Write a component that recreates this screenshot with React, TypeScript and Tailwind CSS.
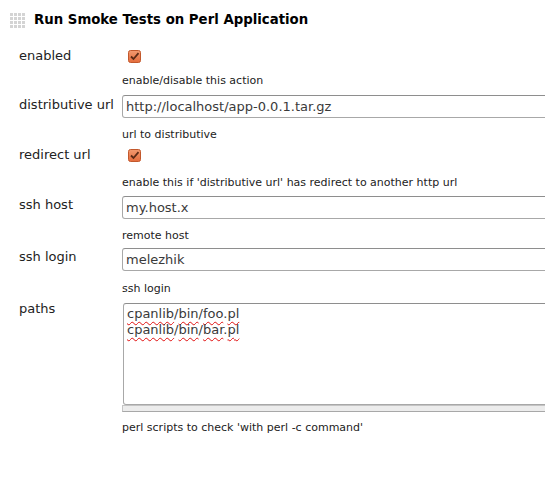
import React from "react";

const font = { fontFamily: '"DejaVu Sans", Verdana, sans-serif' };

function Grip() {
  const dots = [];
  for (let r = 0; r < 4; r++)
    for (let c = 0; c < 4; c++)
      dots.push(<rect key={`${r}-${c}`} x={c * 4} y={r * 4} width="3" height="3" fill="#d4d4d4" />);
  return (
    <svg width="15" height="15" viewBox="0 0 15 15" className="shrink-0">
      {dots}
    </svg>
  );
}

function Check() {
  return (
    <svg width="13" height="13" viewBox="0 0 13 13" className="block">
      <defs>
        <linearGradient id="cb" x1="0" y1="0" x2="0" y2="1">
          <stop offset="0" stopColor="#f29a70" />
          <stop offset="1" stopColor="#e46c3c" />
        </linearGradient>
      </defs>
      <rect x="0.5" y="0.5" width="12" height="12" rx="2" fill="url(#cb)" stroke="#c2582c" />
      <path d="M3 6.5 L5.5 9 L10.5 3.2" fill="none" stroke="#5b2a16" strokeWidth="1.8" />
    </svg>
  );
}

function Label({ children, className = "" }: { children: React.ReactNode; className?: string }) {
  return (
    <div className={`w-[103px] shrink-0 text-[13px] leading-[18px] text-[#222] ${className}`}>{children}</div>
  );
}

function Hint({ children, className = "" }: { children: React.ReactNode; className?: string }) {
  return (
    <div className={`pl-[103px] text-[11px] leading-[14px] text-[#222] ${className}`}>{children}</div>
  );
}

function TextInput({ value }: { value: string }) {
  return (
    <div className="h-[23px] w-[460px] shrink-0 rounded-[3px] border border-[#a8a8a8] border-t-[#8e8e8e] bg-white pl-[3px] text-[13px] leading-[21px] text-[#3a3a3a]">
      {value}
    </div>
  );
}

const wavy = "underline decoration-wavy decoration-[#e01010] decoration-[1px] underline-offset-[3px]";

export default function App() {
  return (
    <div className="w-[545px] h-[483px] overflow-hidden bg-white" style={font}>
      <div className="flex items-center h-[40px] pl-[10px] gap-[9px]">
        <Grip />
        <div className="text-[13.3px] font-bold text-black">Run Smoke Tests on Perl Application</div>
      </div>

      <div className="pl-[19px]">
        {/* enabled */}
        <div className="flex mt-[6px] h-[20px] items-center">
          <Label className="leading-[20px]">enabled</Label>
          <div className="pl-[6px]"><Check /></div>
        </div>
        <Hint className="mt-[8px]">enable/disable this action</Hint>

        {/* distributive url */}
        <div className="flex mt-[7px]">
          <Label className="pt-[1px]">distributive url</Label>
          <TextInput value="http://localhost/app-0.0.1.tar.gz" />
        </div>
        <Hint className="mt-[10px]">url to distributive</Hint>

        {/* redirect url */}
        <div className="flex mt-[3px] h-[20px] items-center">
          <Label className="leading-[20px]">redirect url</Label>
          <div className="pl-[6px]"><Check /></div>
        </div>
        <Hint className="mt-[11px]">enable this if 'distributive url' has redirect to another http url</Hint>

        {/* ssh host */}
        <div className="flex mt-[6px]">
          <Label>ssh host</Label>
          <TextInput value="my.host.x" />
        </div>
        <Hint className="mt-[10px]">remote host</Hint>

        {/* ssh login */}
        <div className="flex mt-[5px]">
          <Label>ssh login</Label>
          <TextInput value="melezhik" />
        </div>
        <Hint className="mt-[11px]">ssh login</Hint>

        {/* paths */}
        <div className="flex mt-[7px]">
          <Label className="-mt-[3px]">paths</Label>
          <div className="w-[460px] shrink-0">
            <div className="h-[102px] ml-[1px] rounded-[3px] border border-[#a8a8a8] border-t-[#8e8e8e] bg-white pl-[3px] pt-[2px] text-[13px] leading-[16px] text-[#3a3a3a]">
              <div>
                <span className={wavy}>cpanlib</span>/<span className={wavy}>bin</span>/<span className={wavy}>foo</span>.<span className={wavy}>pl</span>
              </div>
              <div>
                <span className={wavy}>cpanlib</span>/<span className={wavy}>bin</span>/<span className={wavy}>bar</span>.<span className={wavy}>pl</span>
              </div>
            </div>
            <div className="h-[7px] bg-[#ececec] border border-[#c4c4c4] border-b-[#a8a8a8]" />
          </div>
        </div>
        <Hint className="mt-[9px]">perl scripts to check 'with perl -c command'</Hint>
      </div>
    </div>
  );
}
